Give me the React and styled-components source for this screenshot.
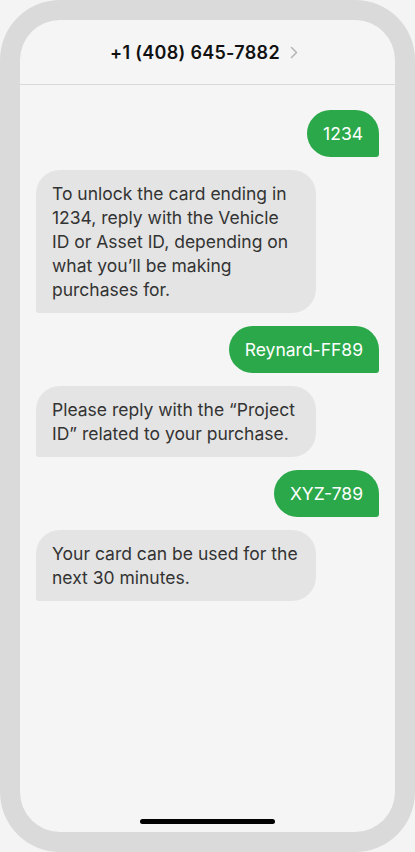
import React from 'react';
import styled, { createGlobalStyle } from 'styled-components';

const GlobalStyle = createGlobalStyle`
  html, body {
    margin: 0;
    padding: 0;
    background: #f4f4f4;
  }
  body {
    font-family: 'Inter', 'Roboto', sans-serif;
    -webkit-font-smoothing: antialiased;
  }
`;

const Frame = styled.div`
  width: 415px;
  height: 852px;
  box-sizing: border-box;
  padding: 20px;
  background: #dadada;
  border-radius: 60px;
`;

const Screen = styled.div`
  height: 100%;
  display: flex;
  flex-direction: column;
  background: #f5f5f5;
  border-radius: 40px;
  overflow: hidden;
`;

const Header = styled.div`
  height: 65px;
  flex-shrink: 0;
  display: flex;
  align-items: center;
  justify-content: center;
  gap: 10px;
  border-bottom: 1px solid #d9d9d9;
  box-sizing: border-box;
  padding-right: 7px;
`;

const Phone = styled.span`
  font-size: 18px;
  font-weight: 600;
  color: #111;
  letter-spacing: 0.3px;
`;

const Thread = styled.div`
  display: flex;
  flex-direction: column;
  gap: 13px;
  padding: 25px 16px;
`;

const Bubble = styled.div`
  align-self: ${({ sent }) => (sent ? 'flex-end' : 'flex-start')};
  max-width: 280px;
  box-sizing: border-box;
  padding: 11.5px 16px;
  font-size: 17.5px;
  line-height: 24px;
  background: ${({ sent }) => (sent ? '#2ba84a' : '#e4e4e4')};
  color: ${({ sent }) => (sent ? '#fff' : '#333')};
  border-radius: ${({ sent }) => (sent ? '24px 24px 3px 24px' : '24px 24px 24px 3px')};
`;

const HomeBar = styled.div`
  margin-top: auto;
  margin-bottom: 8px;
  align-self: center;
  width: 135px;
  height: 5px;
  border-radius: 3px;
  background: #000;
`;

const Chevron = () => (
  <svg width="8" height="13" viewBox="0 0 8 13" fill="none">
    <path d="M1.5 1.5L6.5 6.5L1.5 11.5" stroke="#b5b5b5" strokeWidth="1.5" strokeLinecap="round" strokeLinejoin="round" />
  </svg>
);

const messages = [
  { sent: true, text: '1234' },
  {
    sent: false,
    text: 'To unlock the card ending in 1234, reply with the Vehicle ID or Asset ID, depending on what you\u2019ll be making purchases for.'
  },
  { sent: true, text: 'Reynard-FF89' },
  { sent: false, text: 'Please reply with the \u201cProject ID\u201d related to your purchase.' },
  { sent: true, text: 'XYZ-789' },
  { sent: false, text: 'Your card can be used for the next 30 minutes.' }
];

export default function App() {
  return (
    <>
      <GlobalStyle />
      <Frame>
        <Screen>
          <Header>
            <Phone>+1 (408) 645-7882</Phone>
            <Chevron />
          </Header>
          <Thread>
            {messages.map((m, i) => (
              <Bubble key={i} sent={m.sent}>
                {m.text}
              </Bubble>
            ))}
          </Thread>
          <HomeBar />
        </Screen>
      </Frame>
    </>
  );
}
